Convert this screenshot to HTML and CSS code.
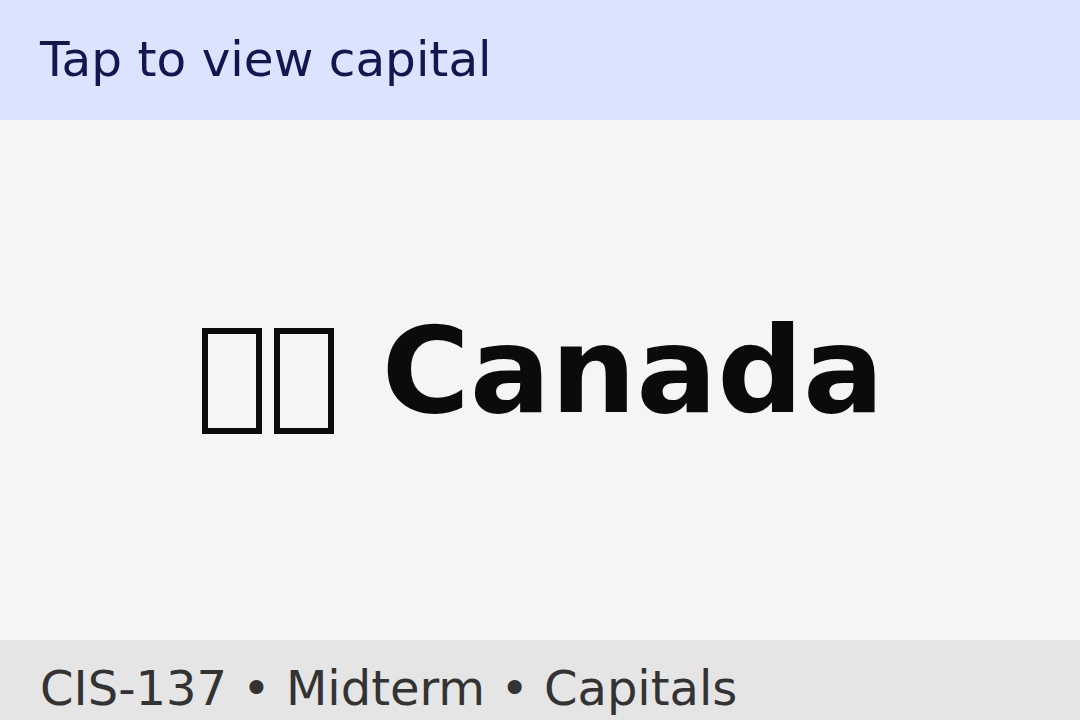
FILE: index.html
```html
<!DOCTYPE html>
<html lang="en">
<head>
<meta charset="utf-8">
<title>Capitals</title>
<link rel="stylesheet" href="styles.css">
</head>
<body>
<div class="app">
  <header class="top">Tap to view capital</header>
  <main class="card">
    <div class="country"><span class="flag" role="img" aria-label="🇨🇦"><span class="tofu"></span><span class="tofu"></span></span> Canada</div>
  </main>
  <footer class="bottom">CIS-137 • Midterm • Capitals</footer>
</div>
</body>
</html>
```

FILE: styles.css
```css
html, body {
  margin: 0;
  padding: 0;
}
body {
  height: 720px;
  overflow: hidden;
  font-family: "DejaVu Sans", sans-serif;
  background: #f5f5f5;
}
.app {
  display: flex;
  flex-direction: column;
  height: 720px;
}
.top {
  flex: none;
  background: #dae4ff;
  color: #13164f;
  font-size: 48.5px;
  padding: 32px 40px;
  height: 56px;
  line-height: 54px;
  box-sizing: content-box;
}
.card {
  flex: none;
  height: 520px;
  background: #f5f5f5;
  display: flex;
  align-items: center;
  justify-content: center;
}
.country {
  font-size: 120px;
  font-weight: bold;
  color: #0b0b0b;
  margin-bottom: 20px;
}
.flag {
  display: inline;
}
.tofu {
  display: inline-block;
  box-sizing: border-box;
  width: 60px;
  height: 106px;
  margin: 0 6px;
  border: 6px solid #0b0b0b;
  vertical-align: -22px;
}
.bottom {
  flex: none;
  background: #e5e5e5;
  color: #333333;
  font-size: 48px;
  padding: 20px 40px;
}
```
